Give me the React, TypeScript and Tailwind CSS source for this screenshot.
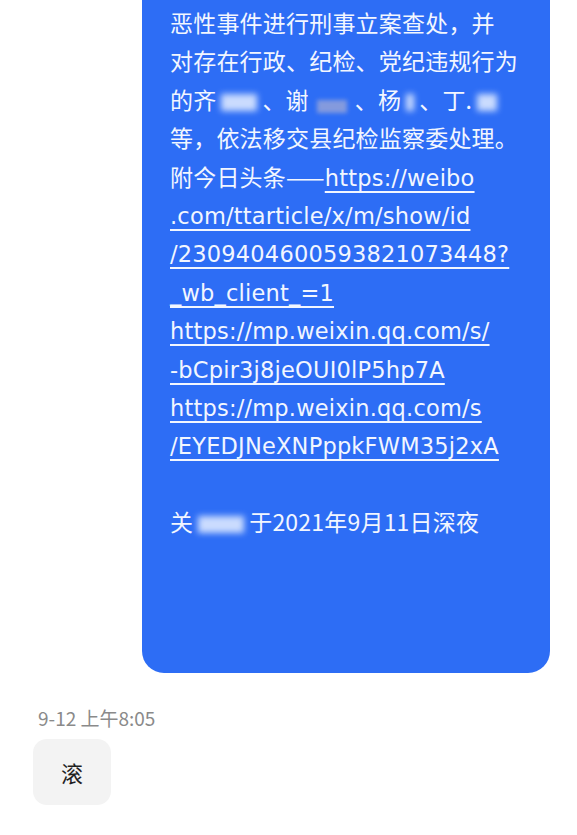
import React from 'react'

const font = { fontFamily: '"Noto Sans CJK SC", "Noto Sans", sans-serif' }

// blurred blob standing in for a redacted name
function Blur({ w, tone = 'light' }: { w: string; tone?: 'light' | 'dark' }) {
  return (
    <span className={`inline-block align-middle ${w} h-[22px] relative`}>
      <span
        className={
          tone === 'light'
            ? 'absolute left-[5px] right-[5px] top-[2px] bottom-[3px] bg-[#dce8ff] blur-[3px] opacity-90'
            : 'absolute left-[8px] right-[8px] top-[8px] bottom-[1px] bg-[#9aa6d8] blur-[2px] opacity-80'
        }
      />
    </span>
  )
}

const Link = ({ children }: { children: React.ReactNode }) => (
  <span className="font-['DejaVu_Sans',sans-serif] text-[22.5px] underline decoration-[1.5px] underline-offset-[5px]">
    {children}
  </span>
)

const Line = ({ children }: { children?: React.ReactNode }) => (
  <div className="h-[38.4px] whitespace-nowrap">{children}</div>
)

export default function App() {
  return (
    <div className="w-[577px] h-[835px] bg-white overflow-hidden" style={font}>
      {/* incoming blue message */}
      <div className="flex justify-end pr-[27px]">
        <div className="w-[408px] h-[673px] bg-[#2d6df5] rounded-b-[22px] pl-[28px] pr-[14px] pt-[3px] text-[23px] leading-[38.4px] text-[#f2f6ff] tracking-[0.2px]">
          <Line>恶性事件进行刑事立案查处，并</Line>
          <Line>对存在行政、纪检、党纪违规行为</Line>
          <Line>
            的齐<Blur w="w-[46px]" />、谢<Blur w="w-[46px]" tone="dark" />、杨<Blur w="w-[18px]" />、丁.<Blur w="w-[30px]" />
          </Line>
          <Line>等，依法移交县纪检监察委处理。</Line>
          <Line>
            附今日头条——<Link>https://weibo</Link>
          </Line>
          <Line><Link>.com/ttarticle/x/m/show/id</Link></Line>
          <Line><Link>/2309404600593821073448?</Link></Line>
          <Line><Link>_wb_client_=1</Link></Line>
          <Line><Link>https://mp.weixin.qq.com/s/</Link></Line>
          <Line><Link>-bCpir3j8jeOUI0lP5hp7A</Link></Line>
          <Line><Link>https://mp.weixin.qq.com/s</Link></Line>
          <Line><Link>/EYEDJNeXNPppkFWM35j2xA</Link></Line>
          <Line />
          <Line>
            关<Blur w="w-[56px]" />于2021年9月11日深夜
          </Line>
        </div>
      </div>

      {/* timestamp */}
      <div className="pl-[38px] mt-[33px] text-[19px] leading-[24px] text-[#8a8a8a]">9-12 上午8:05</div>

      {/* reply */}
      <div className="pl-[33px] mt-[9px]">
        <div className="w-[78px] h-[66px] rounded-[14px] bg-[#f3f3f3] flex items-center justify-center text-[22px] text-[#1f1f1f]">
          滚
        </div>
      </div>
    </div>
  )
}
